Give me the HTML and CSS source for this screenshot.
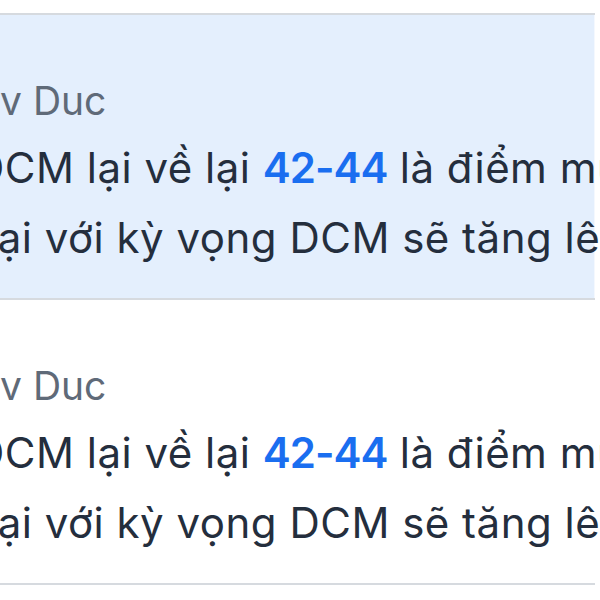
FILE: index.html
```html
<!DOCTYPE html>
<html lang="vi">
<head>
  <meta charset="UTF-8">
  <meta name="viewport" content="width=device-width, initial-scale=1.0">
  <title>comments</title>
  <link rel="stylesheet" href="styles.css">
</head>
<body>

  <div class="feed">
    <div class="post post-active">
      <div class="post-author">v Duc</div>
      <div class="post-text">
        <div class="line line-first">DCM lại về lại <span class="price">42-44</span> là điểm mua</div>
        <div class="line line-second">lại với kỳ vọng DCM sẽ tăng lên</div>
      </div>
    </div>

    <div class="post">
      <div class="post-author">v Duc</div>
      <div class="post-text">
        <div class="line line-first">DCM lại về lại <span class="price">42-44</span> là điểm mua</div>
        <div class="line line-second">lại với kỳ vọng DCM sẽ tăng lên</div>
      </div>
    </div>
  </div>

</body>
</html>
```

FILE: styles.css
```css
body {
  margin: 0;
  background: #fff;
  font-family: Inter, "Noto Sans", Arial, sans-serif;
  overflow: hidden;
  height: 600px;
}

.feed {
  padding-top: 13px;
  width: 595px;
}

.post {
  background: #fff;
  border-bottom: 2px solid #d6dadf;
  padding: 62px 0 25px;
  white-space: nowrap;
}

.post-active {
  background: #e4effd;
  border-top: 2px solid #d6dadf;
  box-shadow: inset -1px 0 0 #f4f8fe;
}

.post-author {
  font-size: 39px;
  line-height: 48px;
  color: #5f6a78;
}

.post-text {
  margin-top: 8px;
  font-size: 42px;
  line-height: 70px;
  letter-spacing: 0.5px;
  color: #242e3d;
}

.line-first {
  margin-left: -26px;
}

.line-second {
  margin-left: -13px;
}

.price {
  color: #1a6ef0;
  font-weight: 600;
  letter-spacing: -1px;
}
```
